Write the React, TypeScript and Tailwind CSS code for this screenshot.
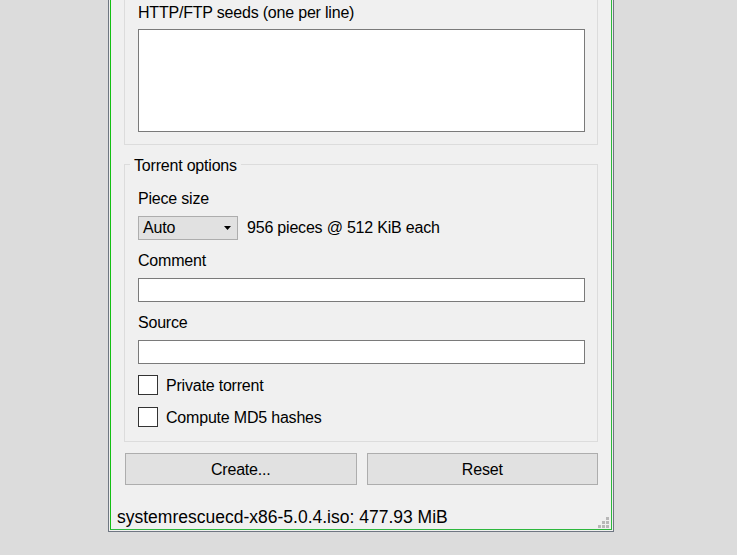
const font = { fontFamily: '"Liberation Sans", Arial, sans-serif' };

function Label({ children, className = '' }: { children: React.ReactNode; className?: string }) {
  return <div className={`text-[16px] leading-[20px] text-black pt-px ${className}`}>{children}</div>;
}

function Checkbox({ label, className = '' }: { label: string; className?: string }) {
  return (
    <div className={`flex items-center h-[20px] ${className}`}>
      <span className="w-[20px] h-[20px] border border-[#333333] bg-white shrink-0" />
      <span className="ml-[8px] pt-[2px] text-[16px] leading-[20px] text-black">{label}</span>
    </div>
  );
}

function Grip() {
  return (
    <svg width="11" height="11" viewBox="0 0 11 11" className="fill-[#b8b8b8]">
      <rect x="8" y="0" width="3" height="3" />
      <rect x="4" y="4" width="3" height="3" />
      <rect x="8" y="4" width="3" height="3" />
      <rect x="0" y="8" width="3" height="3" />
      <rect x="4" y="8" width="3" height="3" />
      <rect x="8" y="8" width="3" height="3" />
    </svg>
  );
}

export default function App() {
  return (
    <div className="w-[737px] h-[555px] bg-[#dcdcdc] overflow-hidden tracking-[-0.2px]" style={font}>
      {/* Window frame */}
      <div className="ml-[108px] w-[506px] h-[532px] border border-t-0 border-[#6f7682] bg-[#f0f0f0] px-px pb-px">
        <div className="h-full border-x border-b border-t-0 border-[#2db83d] border-l-[#13c013] flex flex-col">
          {/* Seeds group (top cut off) */}
          <div className="mx-[13px] border border-t-0 border-[#dcdcdc] pl-[13px] pr-[12px] pb-[12px]">
            <div className="pt-[3px] text-[16px] leading-[20px] text-black">HTTP/FTP seeds (one per line)</div>
            <textarea className="block mt-[6px] w-full h-[103px] border border-[#7a7a7a] bg-white resize-none outline-none" />
          </div>

          {/* Torrent options group */}
          <div className="mx-[13px] mt-[19px] border border-[#dcdcdc] pl-[13px] pr-[12px] pb-[14px]">
            <div className="-mt-[9px] -ml-[8px] text-[16px] leading-[20px] h-[20px]">
              <span className="inline-block bg-[#f0f0f0] px-[4px] text-black">Torrent options</span>
            </div>
            <Label className="mt-[12px]">Piece size</Label>
            <div className="flex items-center mt-[7px]">
              <div className="w-[100px] h-[24px] bg-[#e1e1e1] border border-[#adadad] flex items-center pl-[4px] pr-[6px] justify-between">
                <span className="text-[16px] leading-[22px] text-black">Auto</span>
                <svg width="7" height="4" viewBox="0 0 7 4" className="fill-black">
                  <path d="M0 0h7L3.5 4z" />
                </svg>
              </div>
              <span className="ml-[9px] text-[16px] leading-[20px] text-black">956 pieces @ 512 KiB each</span>
            </div>
            <Label className="mt-[10px]">Comment</Label>
            <input className="block mt-[7px] w-full h-[24px] border border-[#7a7a7a] bg-white outline-none" />
            <Label className="mt-[10px]">Source</Label>
            <input className="block mt-[7px] w-full h-[24px] border border-[#7a7a7a] bg-white outline-none" />
            <Checkbox label="Private torrent" className="mt-[11px]" />
            <Checkbox label="Compute MD5 hashes" className="mt-[12px]" />
          </div>

          {/* Buttons */}
          <div className="ml-[14px] mr-[13px] mt-[11px] grid grid-cols-2 gap-[10px]">
            <button className="h-[32px] bg-[#e1e1e1] border border-[#adadad] text-[16px] leading-[20px] text-black pt-px">Create...</button>
            <button className="h-[32px] bg-[#e1e1e1] border border-[#adadad] text-[16px] leading-[20px] text-black pt-px">Reset</button>
          </div>

          {/* Status bar */}
          <div className="mt-auto flex items-end justify-between pl-[6px] pr-[2px] pb-[1px]">
            <span className="text-[17.5px] leading-[20px] tracking-normal text-black mb-[1px]">systemrescuecd-x86-5.0.4.iso: 477.93 MiB</span>
            <Grip />
          </div>
        </div>
      </div>
    </div>
  );
}
